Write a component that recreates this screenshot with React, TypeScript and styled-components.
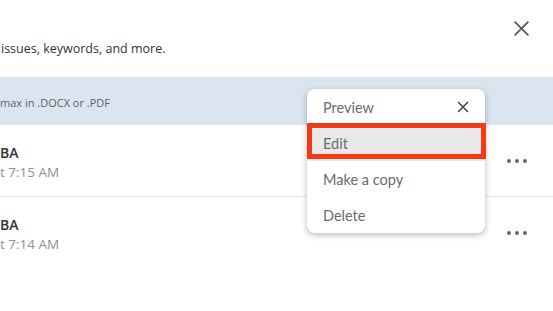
import React from "react";
import styled, { createGlobalStyle } from "styled-components";

const GlobalStyle = createGlobalStyle`
  html, body {
    margin: 0;
    padding: 0;
    background: #ffffff;
    overflow: hidden;
  }
  body {
    font-family: "Open Sans", "Liberation Sans", sans-serif;
  }
`;

const resumes = [
  { id: 1, name: "BA", time: "t 7:15 AM", menuOpen: true },
  { id: 2, name: "BA", time: "t 7:14 AM", menuOpen: false },
];

const menuItems = ["Preview", "Edit", "Make a copy", "Delete"];

const CloseIcon = ({ size, stroke }: { size: number; stroke: number }) => (
  <svg width={size} height={size} viewBox="0 0 16 16" fill="none">
    <path
      d="M2 2 L14 14 M14 2 L2 14"
      stroke="currentColor"
      strokeWidth={stroke}
      strokeLinecap="round"
    />
  </svg>
);

const App = () => {
  return (
    <>
      <GlobalStyle />
      <Modal>
        <Header>
          <CloseButton>
            <CloseIcon size={17} stroke={1.7} />
          </CloseButton>
          <Description>issues, keywords, and more.</Description>
        </Header>
        <UploadBand>max in .DOCX or .PDF</UploadBand>
        <List>
          {resumes.map((r) => (
            <Row key={r.id}>
              <RowText>
                <RowTitle>{r.name}</RowTitle>
                <RowTime>{r.time}</RowTime>
              </RowText>
              <MoreButton>
                <Dot />
                <Dot />
                <Dot />
              </MoreButton>
            </Row>
          ))}
        </List>
        <Menu>
          {menuItems.map((item, i) => (
            <MenuItem key={item} $active={item === "Edit"}>
              {item}
              {i === 0 && (
                <MenuClose>
                  <CloseIcon size={12} stroke={2} />
                </MenuClose>
              )}
            </MenuItem>
          ))}
          <Highlight />
        </Menu>
      </Modal>
    </>
  );
};

export default App;

const Modal = styled.div`
  position: relative;
  width: 553px;
  height: 311px;
  background: #ffffff;
`;

const Header = styled.div`
  height: 77px;
  display: flex;
  flex-direction: column;
  align-items: flex-start;
`;

const CloseButton = styled.div`
  align-self: flex-end;
  display: flex;
  align-items: center;
  justify-content: center;
  width: 20px;
  height: 20px;
  margin: 18px 22px 0 0;
  color: #5a5a5a;
`;

const Description = styled.div`
  margin-top: 2px;
  padding-left: 1px;
  font-size: 12.5px;
  color: #333333;
  line-height: 18px;
`;

const UploadBand = styled.div`
  height: 48px;
  background: #dae5f0;
  display: flex;
  align-items: center;
  padding-top: 2px;
  box-sizing: border-box;
  font-size: 11px;
  color: #5f6368;
`;

const List = styled.div`
  display: flex;
  flex-direction: column;
`;

const Row = styled.div`
  height: 71px;
  display: flex;
  align-items: center;
  justify-content: space-between;
  border-bottom: 1px solid #e6e6e6;

  &:last-child {
    border-bottom: none;
  }
`;

const RowText = styled.div`
  display: flex;
  flex-direction: column;
  gap: 1px;
  margin-top: 4px;
`;

const RowTitle = styled.div`
  font-size: 14px;
  font-weight: 600;
  color: #333333;
  line-height: 19px;
`;

const RowTime = styled.div`
  font-size: 13.5px;
  color: #909090;
  line-height: 19px;
`;

const MoreButton = styled.div`
  display: flex;
  gap: 4px;
  margin-right: 26px;
`;

const Dot = styled.span`
  width: 4px;
  height: 4px;
  border-radius: 50%;
  background: #666666;
`;

const Menu = styled.div`
  position: absolute;
  left: 307px;
  top: 89px;
  width: 178px;
  background: #ffffff;
  border-radius: 8px;
  box-shadow: 0 2px 6px rgba(0, 0, 0, 0.28);
  display: flex;
  flex-direction: column;
`;

const MenuItem = styled.div<{ $active?: boolean }>`
  height: 36px;
  display: flex;
  align-items: center;
  justify-content: space-between;
  padding: 0 16px;
  font-family: "Lato", "Open Sans", sans-serif;
  font-size: 14.5px;
  color: #6b6b6b;
  background: ${(p) => (p.$active ? "#e9e9e9" : "transparent")};
`;

const MenuClose = styled.span`
  display: flex;
  color: #444444;
`;

const Highlight = styled.div`
  position: absolute;
  left: 0;
  top: 34px;
  width: 179px;
  height: 36px;
  box-sizing: border-box;
  border: 5px solid #f33a16;
  pointer-events: none;
`;
